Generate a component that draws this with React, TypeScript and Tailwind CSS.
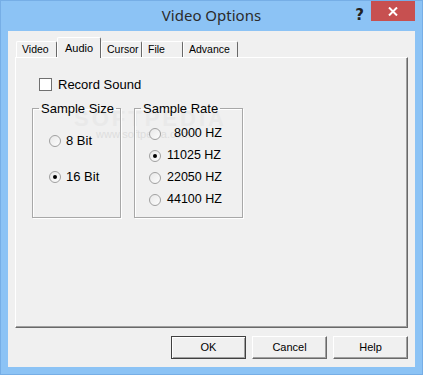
import React from 'react';

const tabs = [
  { label: 'Video', cls: 'w-[41px]' },
  { label: 'Audio', cls: 'w-[44px]', active: true },
  { label: 'Cursor', cls: 'w-[41px]' },
  { label: 'File', cls: 'w-[41px]' },
  { label: 'Advance', cls: 'w-[55px]' },
];

const rates = [
  { label: '8000 HZ', extra: 'pl-[7px]' },
  { label: '11025 HZ', checked: true },
  { label: '22050 HZ' },
  { label: '44100 HZ' },
];

function Radio({ checked }: { checked?: boolean }) {
  return (
    <span className="w-[12px] h-[12px] rounded-full border border-[#a0a0a0] bg-gradient-to-br from-[#e8e8e8] to-[#fdfdfd] flex items-center justify-center shrink-0">
      {checked && <span className="w-[4px] h-[4px] rounded-full bg-black" />}
    </span>
  );
}

function Btn({ label, def }: { label: string; def?: boolean }) {
  return (
    <button
      className={`w-[75px] h-[23px] bg-[#f0f0f0] text-[11px] text-black border ${
        def
          ? 'border-[#404040] shadow-[inset_1px_1px_0_#fff,inset_-1px_-1px_0_#a0a0a0]'
          : 'border-t-white border-l-white border-r-[#696969] border-b-[#696969] shadow-[inset_-1px_-1px_0_#a0a0a0]'
      }`}
    >
      {label}
    </button>
  );
}

export default function App() {
  return (
    <div className="w-[423px] h-[375px] bg-[#8cc3f5] border border-[#76aee6] flex flex-col overflow-hidden font-['Liberation_Sans',Arial,sans-serif]">
      {/* title bar */}
      <div className="h-[30px] relative flex items-start">
        <div className="absolute inset-x-0 top-[4px] text-center text-[15px] text-[#2b2b2b] font-['Noto_Sans',sans-serif] leading-[20px]">
          Video Options
        </div>
        <div className="ml-auto flex items-start">
          <span className="mt-[5px] mr-[7px] text-[15px] font-bold text-[#222] leading-[18px] font-['DejaVu_Sans',sans-serif]">?</span>
          <div className="w-[44px] h-[20px] bg-[#c75050] mr-[7px] flex items-center justify-center relative z-10">
            <svg width="10" height="9" viewBox="0 0 10 9">
              <path d="M1 0.5 L9 8.5 M9 0.5 L1 8.5" stroke="#fff" strokeWidth="2" />
            </svg>
          </div>
        </div>
      </div>

      {/* client */}
      <div className="mx-[7px] h-[336px] bg-[#f0f0f0] pt-[7px] pl-[7px] flex flex-col">
        {/* tabs */}
        <div className="flex items-end h-[20px] ml-[1px] -mb-px relative z-10 text-[10.5px] text-black">
          {tabs.map((t) =>
            t.active ? (
              <div
                key={t.label}
                className={`${t.cls} h-[21px] bg-[#f0f0f0] border-l border-t border-r border-l-white border-t-white border-r-[#696969] rounded-t-[2px] pt-[2px] flex justify-center text-[11px]`}
              >
                {t.label}
              </div>
            ) : (
              <div
                key={t.label}
                className={`${t.cls} h-[16px] mb-[1px] border-l border-t border-r border-l-white border-t-white border-r-[#696969] rounded-t-[2px] leading-[14px] pl-[5px] whitespace-nowrap overflow-hidden`}
              >
                {t.label}
              </div>
            )
          )}
        </div>

        {/* panel */}
        <div className="w-[393px] h-[271px] relative border border-t-white border-l-white border-r-[#696969] border-b-[#696969] shadow-[inset_-1px_-1px_0_#a0a0a0] text-[13px] text-black">
          <div className="absolute left-[58px] top-[44px] text-[22px] font-bold tracking-[3px] text-[#e9e9e9] pointer-events-none">
            SOFTPEDIA
          </div>
          <div className="absolute left-[80px] top-[68px] text-[11px] text-[#dedede] pointer-events-none">
            www.softpedia.com
          </div>

          <div className="relative flex items-center mt-[20px] ml-[23px] h-[13px]">
            <span className="w-[13px] h-[13px] border border-[#707070] bg-white" />
            <span className="ml-[6px] leading-[15px]">Record Sound</span>
          </div>

          <div className="relative flex mt-[10px] ml-[16px] gap-[13px]">
            <fieldset className="w-[89px] h-[117px] border border-[#a8a8a8] shadow-[1px_1px_0_#fff,inset_1px_1px_0_#fff]">
              <legend className="ml-[6px] px-[2px] leading-[15px] whitespace-nowrap">Sample Size</legend>
              <div className="pl-[16px]">
                <div className="flex items-center h-[15px] mt-[17px]">
                  <Radio />
                  <span className="ml-[5px]">8 Bit</span>
                </div>
                <div className="flex items-center h-[15px] mt-[21px]">
                  <Radio checked />
                  <span className="ml-[5px]">16 Bit</span>
                </div>
              </div>
            </fieldset>
            <fieldset className="w-[109px] h-[117px] border border-[#a8a8a8] shadow-[1px_1px_0_#fff,inset_1px_1px_0_#fff]">
              <legend className="ml-[6px] px-[2px] leading-[15px] whitespace-nowrap">Sample Rate</legend>
              <div className="flex flex-col gap-[7px] mt-[10px] pl-[14px]">
                {rates.map((r) => (
                  <div key={r.label} className="flex items-center h-[15px]">
                    <Radio checked={r.checked} />
                    <span className={`ml-[6px] text-[12.5px] ${r.extra ?? ''}`}>{r.label}</span>
                  </div>
                ))}
              </div>
            </fieldset>
          </div>
        </div>

        {/* buttons */}
        <div className="w-[393px] flex justify-end gap-[6px] mt-[8px]">
          <Btn label="OK" def />
          <Btn label="Cancel" />
          <Btn label="Help" />
        </div>
      </div>
    </div>
  );
}
